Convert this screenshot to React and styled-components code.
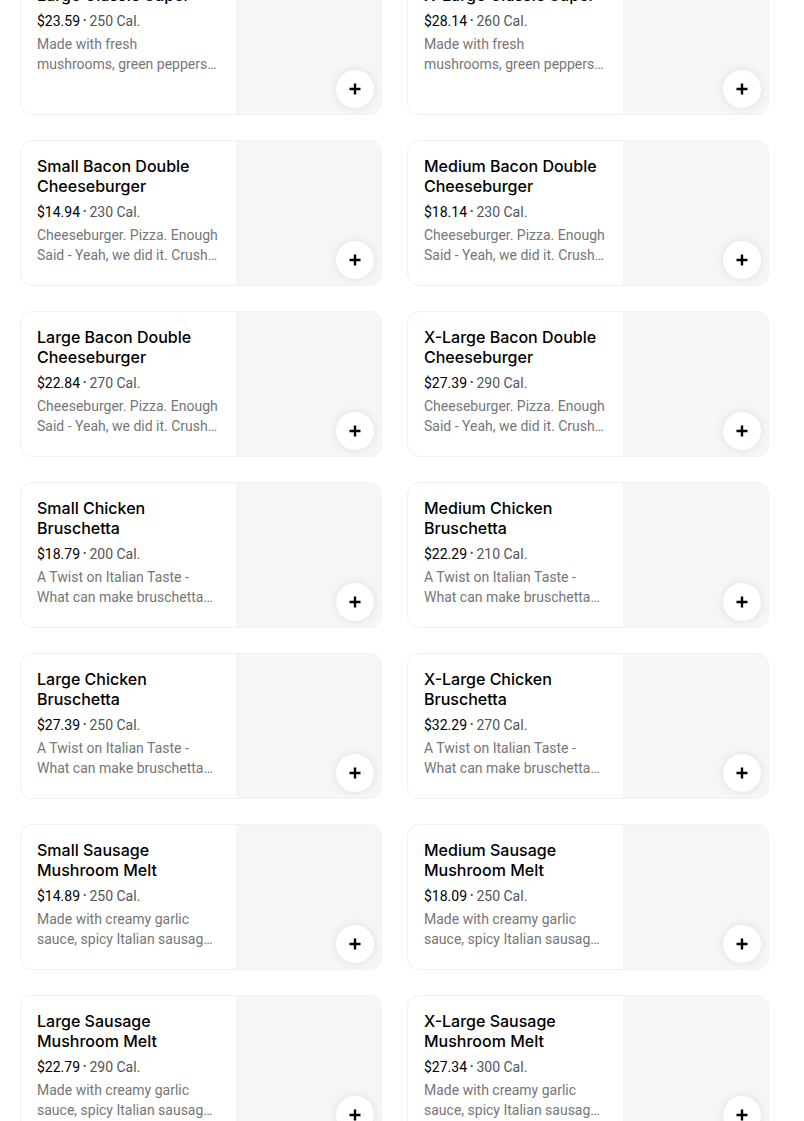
import React from "react";
import styled, { createGlobalStyle } from "styled-components";

const GlobalStyle = createGlobalStyle`
  html, body {
    margin: 0;
    padding: 0;
    background: #fff;
    overflow: hidden;
  }
  body {
    font-family: Roboto, "Noto Sans", "Liberation Sans", sans-serif;
    color: #000;
  }
`

const Page = styled.main`
  padding: 0 35px 0 20px;
  height: 1121px;
  overflow: hidden;
`

const Grid = styled.ul`
  list-style: none;
  margin: -31px 0 0;
  padding: 0;
  display: grid;
  grid-template-columns: repeat(2, 362px);
  column-gap: 25px;
  row-gap: 25px;
`

const Card = styled.li`
  display: flex;
  height: 146px;
  box-sizing: border-box;
  border: 1px solid #f1f1f1;
  border-radius: 12px;
  overflow: hidden;
  background: #fff;
`

const Info = styled.div`
  flex: 1;
  min-width: 0;
  padding: 15px 16px 16px;
`

const Title = styled.h3`
  margin: 0;
  font-family: Inter, Roboto, "Liberation Sans", sans-serif;
  font-size: 16px;
  line-height: 20px;
  font-weight: 500;
  color: #000;
`

const Meta = styled.div`
  margin-top: 6px;
  font-size: 14px;
  line-height: 20px;
  color: #545454;
`

const Price = styled.span`
  color: #000;
`

const Dot = styled.span`
  font-size: 10px;
  vertical-align: 2px;
  margin: 0 3px;
`

const Desc = styled.p`
  margin: 3px 0 0;
  font-size: 14px;
  line-height: 20px;
  color: #767676;
  white-space: pre-line;
  display: -webkit-box;
  -webkit-line-clamp: 2;
  -webkit-box-orient: vertical;
  overflow: hidden;
`

const Thumb = styled.div`
  position: relative;
  width: 145px;
  flex-shrink: 0;
  background: #f6f6f6;
`

const AddButton = styled.button`
  position: absolute;
  right: 7px;
  bottom: 6px;
  width: 38px;
  height: 38px;
  border: 0;
  border-radius: 50%;
  background: #fff;
  box-shadow: 0 0 8px rgba(0, 0, 0, 0.1);
  display: flex;
  align-items: center;
  justify-content: center;
  padding: 0;
  cursor: pointer;
`

function PlusIcon() {
  return (
    <svg width="12" height="12" viewBox="0 0 12 12">
      <path d="M6 0.5v11M0.5 6h11" stroke="#000" strokeWidth="2.4" />
    </svg>
  );
}

// descriptions as they show in the two clamped lines
const descs = {
  classic: "Made with fresh\nmushrooms, green peppers…",
  bacon: "Cheeseburger. Pizza. Enough\nSaid - Yeah, we did it. Crush…",
  bruschetta: "A Twist on Italian Taste -\nWhat can make bruschetta…",
  melt: "Made with creamy garlic\nsauce, spicy Italian sausag…",
};

const items = [
  { name: "Large Classic Super", price: "$23.59", cal: 250, d: "classic" },
  { name: "X-Large Classic Super", price: "$28.14", cal: 260, d: "classic" },
  { name: "Small Bacon Double Cheeseburger", price: "$14.94", cal: 230, d: "bacon" },
  { name: "Medium Bacon Double Cheeseburger", price: "$18.14", cal: 230, d: "bacon" },
  { name: "Large Bacon Double Cheeseburger", price: "$22.84", cal: 270, d: "bacon" },
  { name: "X-Large Bacon Double Cheeseburger", price: "$27.39", cal: 290, d: "bacon" },
  { name: "Small Chicken Bruschetta", price: "$18.79", cal: 200, d: "bruschetta" },
  { name: "Medium Chicken Bruschetta", price: "$22.29", cal: 210, d: "bruschetta" },
  { name: "Large Chicken Bruschetta", price: "$27.39", cal: 250, d: "bruschetta" },
  { name: "X-Large Chicken Bruschetta", price: "$32.29", cal: 270, d: "bruschetta" },
  { name: "Small Sausage Mushroom Melt", price: "$14.89", cal: 250, d: "melt" },
  { name: "Medium Sausage Mushroom Melt", price: "$18.09", cal: 250, d: "melt" },
  { name: "Large Sausage Mushroom Melt", price: "$22.79", cal: 290, d: "melt" },
  { name: "X-Large Sausage Mushroom Melt", price: "$27.34", cal: 300, d: "melt" },
];

function MenuItem({ item }) {
  return (
    <Card>
      <Info>
        <Title>{item.name}</Title>
        <Meta>
          <Price>{item.price}</Price>
          <Dot>•</Dot>
          {item.cal} Cal.
        </Meta>
        <Desc>{descs[item.d]}</Desc>
      </Info>
      <Thumb>
        <AddButton aria-label="Add">
          <PlusIcon />
        </AddButton>
      </Thumb>
    </Card>
  );
}

export default function App() {
  return (
    <>
      <GlobalStyle />
      <Page>
        <Grid>
          {items.map((item, i) => (
            <MenuItem key={i} item={item} />
          ))}
        </Grid>
      </Page>
    </>
  );
}
